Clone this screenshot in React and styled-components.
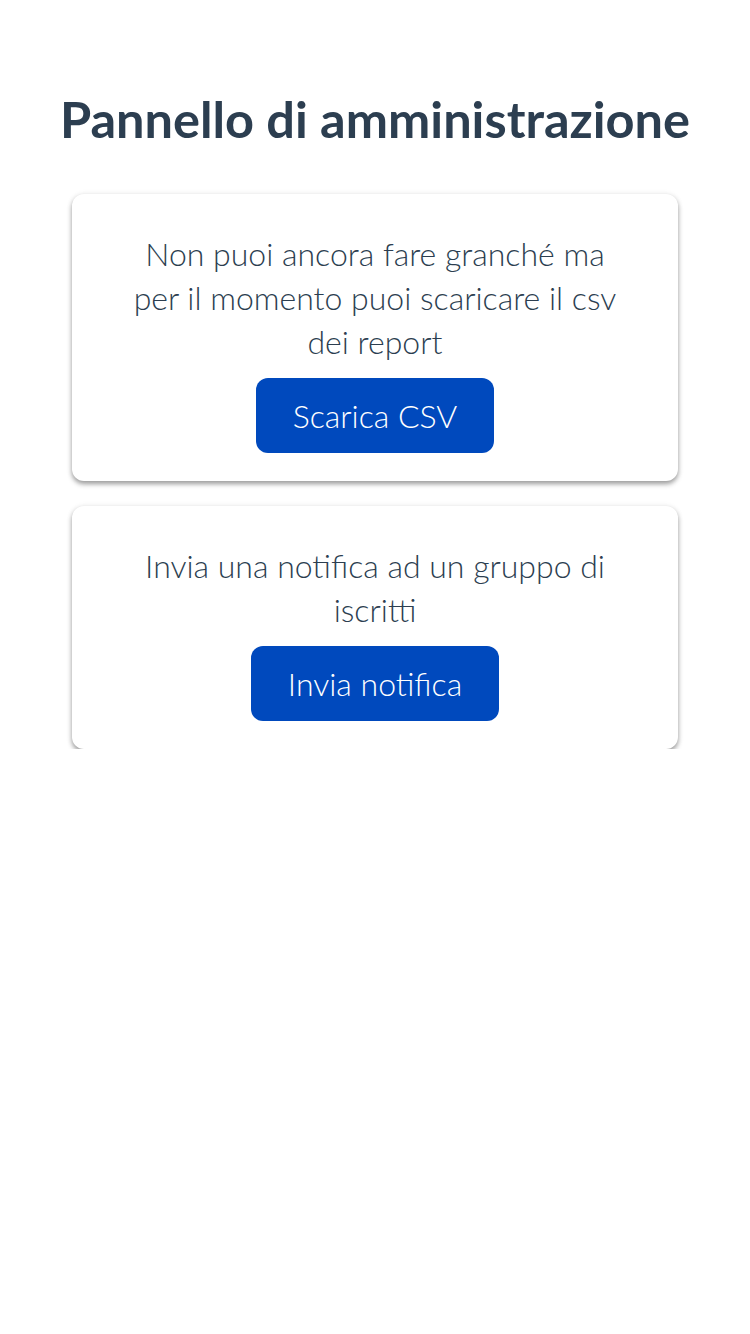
import React from "react";
import styled, { createGlobalStyle } from "styled-components";

const GlobalStyle = createGlobalStyle`
  html, body {
    margin: 0;
    padding: 0;
    background: #ffffff;
  }
  body {
    font-family: Lato, "Noto Sans", sans-serif;
    color: #2c3e50;
  }
`;

const AdminPanel = () => {
  return (
    <StyledPage>
      <GlobalStyle />
      <StyledTitle>Pannello di amministrazione</StyledTitle>
      <StyledCards>
        <StyledCard>
          <p>
            Non puoi ancora fare granché ma per il momento puoi scaricare il
            csv dei report
          </p>
          <StyledButton>Scarica CSV</StyledButton>
        </StyledCard>
        <StyledCard>
          <p>Invia una notifica ad un gruppo di iscritti</p>
          <StyledButton>Invia notifica</StyledButton>
        </StyledCard>
      </StyledCards>
    </StyledPage>
  );
};

const StyledPage = styled.div`
  display: flex;
  flex-direction: column;
  align-items: center;
  padding-top: 86px;
`;

const StyledTitle = styled.h1`
  margin: 0 0 42px 0;
  font-size: 50.5px;
  font-weight: 700;
  line-height: 66px;
  color: #2c3e50;
`;

const StyledCards = styled.div`
  display: flex;
  flex-direction: column;
  gap: 25px;
  width: 606px;
`;

const StyledCard = styled.div`
  display: flex;
  flex-direction: column;
  align-items: center;
  padding: 38px 50px 28px;
  background: #ffffff;
  border-radius: 12px;
  box-shadow: 0 3px 5px rgba(0, 0, 0, 0.38), 0 0 6px rgba(0, 0, 0, 0.06);
  p {
    max-width: 495px;
    margin: 0 0 14px 0;
    font-size: 32px;
    font-weight: 300;
    line-height: 44px;
    text-align: center;
    color: #2c3e50;
  }
`;

const StyledButton = styled.button`
  height: 75px;
  padding: 0 37px;
  border: none;
  border-radius: 12px;
  background: #0049bd;
  color: #ffffff;
  font-family: Lato, "Noto Sans", sans-serif;
  font-size: 32px;
  font-weight: 300;
  cursor: pointer;
`;

export default AdminPanel;
